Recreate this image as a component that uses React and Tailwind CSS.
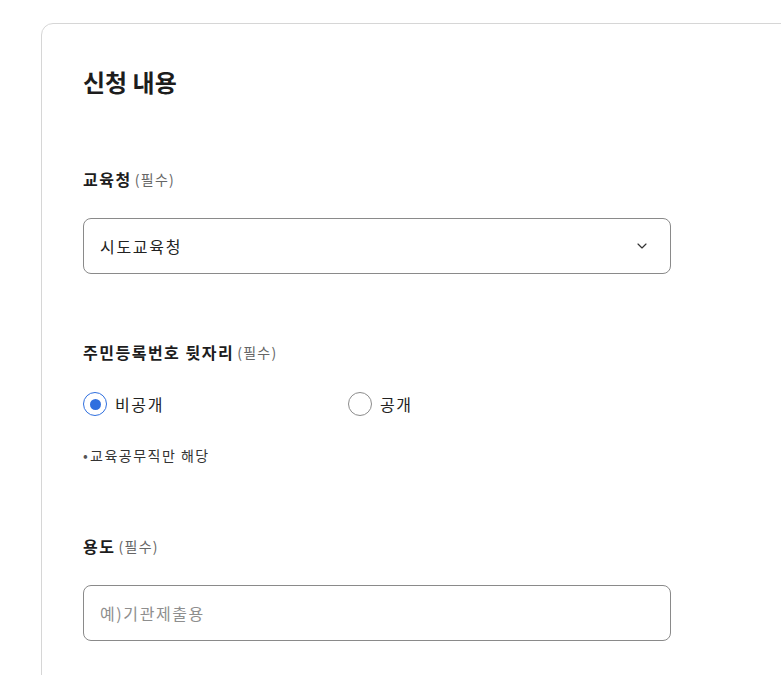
import { ChevronDown } from 'lucide-react';

const font = { fontFamily: '"Noto Sans CJK KR", "Noto Sans", sans-serif' };

const Label = ({ children, className = '' }) => (
  <div className={`flex items-center h-6 ${className}`}>
    <span className="text-[16px] font-bold text-[#1d1d1d] leading-6 tracking-[1.5px]">{children}</span>
    <span className="ml-[3px] text-[14px] text-[#666666] leading-6 tracking-[1.3px]">(필수)</span>
  </div>
);

const Radio = ({ checked, label }) => (
  <label className="flex items-center gap-2 h-6">
    {checked ? (
      <span className="w-6 h-6 rounded-full border-[1.5px] border-[#2f6fdf] flex items-center justify-center">
        <span className="w-[11px] h-[11px] rounded-full bg-[#2f6fdf]" />
      </span>
    ) : (
      <span className="w-6 h-6 rounded-full border-[1.5px] border-[#8c8c8c]" />
    )}
    <span className="text-[16px] text-[#222222] leading-6 tracking-[1.6px]">{label}</span>
  </label>
);

export default function App() {
  return (
    <div className="w-[781px] h-[675px] overflow-hidden bg-white" style={font}>
      <div className="ml-[41px] mt-[23px] w-[800px] h-[720px] border border-[#d6d6d6] rounded-[12px] pl-[41px] pt-[42px]">
        <h2 className="text-[24px] font-bold text-[#1d1d1d] leading-8">신청 내용</h2>

        <Label className="mt-[69px]">교육청</Label>
        <div className="mt-[27px] w-[588px] h-[56px] border border-[#8a8a8a] rounded-[8px] flex items-center justify-between pl-4 pr-[20px]">
          <span className="text-[16px] text-[#222222] tracking-[1.7px]">시도교육청</span>
          <ChevronDown className="w-[16px] h-[16px] text-[#333333]" strokeWidth={1.75} />
        </div>

        <Label className="mt-[66px]">
          주민등록번호 뒷자리
        </Label>
        <div className="mt-[28px] flex items-center">
          <div className="w-[265px]">
            <Radio checked label="비공개" />
          </div>
          <Radio label="공개" />
        </div>
        <p className="mt-[29px] flex items-center text-[14px] leading-5 text-[#333333]">
          <span className="w-[7px] text-[#555555]">•</span>
          <span className="tracking-[1.5px]">교육공무직만 해당</span>
        </p>

        <Label className="mt-[69px]">용도</Label>
        <div className="mt-[27px] w-[588px] h-[56px] border border-[#8a8a8a] rounded-[8px] flex items-center pl-4">
          <span className="text-[16px] text-[#8e8e8e] tracking-[1.6px]">예)기관제출용</span>
        </div>
      </div>
    </div>
  );
}
